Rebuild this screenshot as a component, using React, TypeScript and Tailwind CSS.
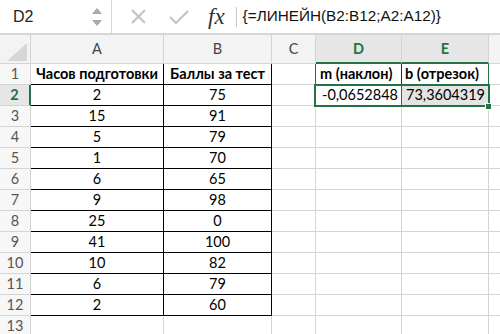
import React from "react";

type C = { w: string; cls?: string; children?: React.ReactNode };
function Cell({ w, cls = "", children }: C) {
  return <div className={`${w} shrink-0 h-full flex items-center overflow-hidden whitespace-nowrap ${cls}`}>{children}</div>;
}

const data: [string, string][] = [
  ["2", "75"], ["15", "91"], ["5", "79"], ["1", "70"], ["6", "65"], ["9", "98"],
  ["25", "0"], ["41", "100"], ["10", "82"], ["6", "79"], ["2", "60"],
];

const gray = "border-[#d4d4d4]";

export default function App() {
  return (
    <div className="w-[500px] h-[334px] overflow-hidden bg-white relative" style={{ fontFamily: "Lato, 'Open Sans', sans-serif" }}>
      {/* formula bar */}
      <div className="h-[35px] flex items-stretch border-b-2 border-[#d6d6d6] bg-white" style={{ fontFamily: "'Liberation Sans', Arial, sans-serif" }}>
        <div className="w-[112px] shrink-0 flex items-center pl-[13px] pr-[6px] border-r border-[#d6d6d6]">
          <span className="text-[16px] text-[#222] flex-1">D2</span>
          <svg width="12" height="22" viewBox="0 0 12 22" className="mr-[2px]">
            <path d="M6 2 L11 8 L1 8 Z" fill="#a9a9a9" />
            <path d="M1 14 L11 14 L6 20 Z" fill="#a9a9a9" />
          </svg>
        </div>
        <div className="flex items-center pl-[18px]">
          <svg width="17" height="17" viewBox="0 0 17 17">
            <path d="M2 2 L15 15 M15 2 L2 15" stroke="#c4c4c4" strokeWidth="2.2" />
          </svg>
          <svg width="22" height="18" viewBox="0 0 22 18" className="ml-[21px]">
            <path d="M2 9 L8 15 L20 3" stroke="#c4c4c4" strokeWidth="2.2" fill="none" />
          </svg>
          <span className="ml-[18px] text-[23px] italic text-[#333] leading-none" style={{ fontFamily: "'Liberation Serif', 'Times New Roman', serif" }}>fx</span>
          <div className="ml-[11px] w-px h-[20px] bg-[#c8c8c8]" />
          <span className="ml-[6px] text-[15.3px] text-[#111]">{"{=ЛИНЕЙН(B2:B12;A2:A12)}"}</span>
        </div>
      </div>

      {/* column header */}
      <div className="h-[29px] flex bg-[#f3f3f3] text-[14.5px] text-[#444]">
        <Cell w="w-[31px]" cls={`border-r border-b ${gray} relative`}>
          <svg width="20" height="18" viewBox="0 0 20 18" className="absolute right-[3px] bottom-[2px]">
            <path d="M20 0 L20 18 L0 18 Z" fill="#d6d6d6" />
          </svg>
        </Cell>
        <Cell w="w-[133px]" cls={`justify-center border-r border-b ${gray}`}>A</Cell>
        <Cell w="w-[108px]" cls={`justify-center border-r border-b ${gray}`}>B</Cell>
        <Cell w="w-[44px]" cls={`justify-center border-r border-b ${gray}`}>C</Cell>
        <Cell w="w-[86px]" cls={`justify-center border-r border-[#d4d4d4] border-b-2 border-b-[#217346] bg-[#e6e6e6] text-[#217346] font-bold`}>D</Cell>
        <Cell w="w-[87px]" cls={`justify-center border-r border-[#d4d4d4] border-b-2 border-b-[#217346] bg-[#e6e6e6] text-[#217346] font-bold`}>E</Cell>
        <Cell w="flex-1" cls={`border-b ${gray}`} />
      </div>

      {/* row 1 */}
      <div className="h-[21px] flex text-[14.5px] text-black">
        <Cell w="w-[31px]" cls={`justify-center bg-[#f7f7f7] text-[#555] border-r border-b ${gray}`}>1</Cell>
        <Cell w="w-[133px]" cls="justify-center font-bold border-r border-b border-black">Часов подготовки</Cell>
        <Cell w="w-[108px]" cls="justify-center font-bold border-r border-b border-black">Баллы за тест</Cell>
        <Cell w="w-[44px]" cls={`border-r border-r-[#217346] border-b ${gray}`} />
        <Cell w="w-[86px]" cls="pl-[4px] font-bold border-r border-r-[#2a2a2a] border-b border-b-[#217346]">m (наклон)</Cell>
        <Cell w="w-[87px]" cls="pl-[3px] font-bold border-r border-b border-[#217346]">b (отрезок)</Cell>
        <Cell w="flex-1" cls={`border-b ${gray}`} />
      </div>

      {data.map(([a, b], i) => {
        const r = i + 2;
        const sel = r === 2;
        return (
          <div key={r} className="h-[21px] flex text-[14.5px] text-black">
            <Cell
              w="w-[31px]"
              cls={
                sel
                  ? `justify-center bg-[#e6e6e6] text-[#217346] font-bold border-r-2 border-r-[#217346] border-b ${gray}`
                  : `justify-center bg-[#f7f7f7] text-[#555] border-r border-b ${gray}`
              }
            >
              {r}
            </Cell>
            <Cell w="w-[133px]" cls="justify-center border-r border-b border-black">{a}</Cell>
            <Cell w="w-[108px]" cls="justify-center border-r border-b border-black">{b}</Cell>
            <Cell w="w-[44px]" cls={`border-r border-b ${gray}`} />
            <Cell w="w-[86px]" cls={`justify-end pr-[3px] border-r ${sel ? "border-r-[#555]" : ""} border-b ${gray}`}>
              {sel ? "-0,0652848" : ""}
            </Cell>
            <Cell w="w-[87px]" cls={`justify-end pr-[3px] border-r border-b ${gray} ${sel ? "bg-[#e4e4e4]" : ""}`}>
              {sel ? "73,3604319" : ""}
            </Cell>
            <Cell w="flex-1" cls={`border-b ${gray}`} />
          </div>
        );
      })}

      {/* row 13 */}
      <div className="h-[21px] flex text-[14.5px]">
        <Cell w="w-[31px]" cls={`justify-center bg-[#f7f7f7] text-[#555] border-r border-b ${gray}`}>13</Cell>
        <Cell w="w-[133px]" cls={`border-r border-b ${gray}`} />
        <Cell w="w-[108px]" cls={`border-r border-b ${gray}`} />
        <Cell w="w-[44px]" cls={`border-r border-b ${gray}`} />
        <Cell w="w-[86px]" cls={`border-r border-b ${gray}`} />
        <Cell w="w-[87px]" cls={`border-r border-b ${gray}`} />
        <Cell w="flex-1" cls={`border-b ${gray}`} />
      </div>

      {/* selection overlay */}
      <div className="absolute left-[314px] top-[84px] w-[176px] h-[23px] border-2 border-[#217346] pointer-events-none" />
      <div className="absolute left-[485px] top-[103px] w-[7px] h-[7px] bg-[#217346] border border-white" />
    </div>
  );
}
